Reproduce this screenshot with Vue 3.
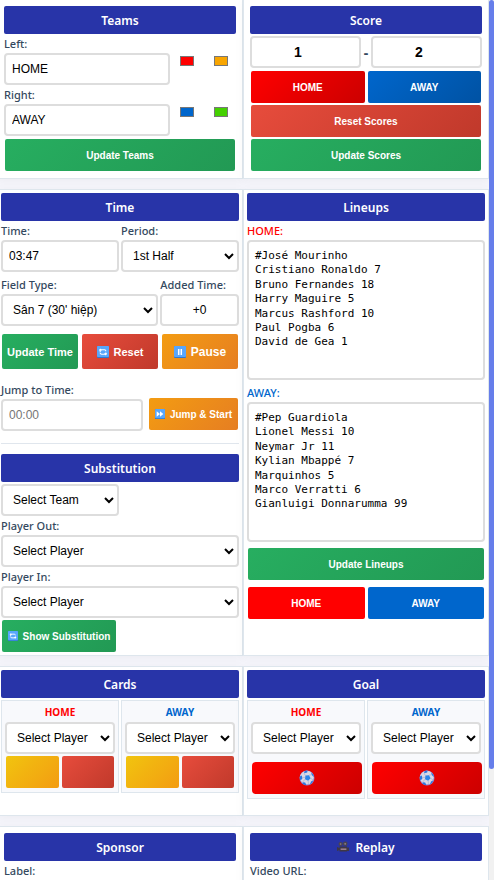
<script setup>
import { ref } from 'vue'

const teams = ref([
  { id: 'left', label: 'Left:', name: 'HOME', primary: '#ff0000', secondary: '#f8a500' },
  { id: 'right', label: 'Right:', name: 'AWAY', primary: '#0066cc', secondary: '#44d000' },
])
const scores = ref([1, 2])
const time = ref('03:47')
const added = ref('+0')
const jump = ref('')
const lineups = ref([
  {
    side: 'home',
    name: 'HOME',
    text: '#José Mourinho\nCristiano Ronaldo 7\nBruno Fernandes 18\nHarry Maguire 5\nMarcus Rashford 10\nPaul Pogba 6\nDavid de Gea 1',
  },
  {
    side: 'away',
    name: 'AWAY',
    text: '#Pep Guardiola\nLionel Messi 10\nNeymar Jr 11\nKylian Mbappé 7\nMarquinhos 5\nMarco Verratti 6\nGianluigi Donnarumma 99',
  },
])
const sides = [
  { side: 'home', name: 'HOME' },
  { side: 'away', name: 'AWAY' },
]
</script>

<template>
  <div class="shell">
    <main class="board">
      <div class="row first">
        <section class="card roomy">
          <h2>Teams</h2>
          <template v-for="t in teams" :key="t.id">
            <label :for="t.id">{{ t.label }}</label>
            <div class="team">
              <input :id="t.id" v-model="t.name" type="text" />
              <div class="swatches">
                <input v-model="t.primary" type="color" :aria-label="t.name + ' primary'" />
                <input v-model="t.secondary" type="color" :aria-label="t.name + ' secondary'" />
              </div>
            </div>
          </template>
          <div class="actions"><button class="green">Update Teams</button></div>
        </section>
        <section class="card roomy">
          <h2>Score</h2>
          <div class="score">
            <input v-model="scores[0]" type="text" aria-label="Home score" />
            <span>-</span>
            <input v-model="scores[1]" type="text" aria-label="Away score" />
          </div>
          <div class="actions">
            <button class="home-grad">HOME</button>
            <button class="away-grad">AWAY</button>
          </div>
          <div class="actions"><button class="red">Reset Scores</button></div>
          <div class="actions"><button class="green">Update Scores</button></div>
        </section>
      </div>

      <div class="row">
        <section class="card">
          <h2>Time</h2>
          <div class="halves">
            <div>
              <label for="time">Time:</label>
              <input id="time" v-model="time" type="text" />
            </div>
            <div>
              <label for="period">Period:</label>
              <select id="period"><option>1st Half</option></select>
            </div>
          </div>
          <div class="thirds">
            <div>
              <label for="field">Field Type:</label>
              <select id="field"><option>Sân 7 (30' hiệp)</option></select>
            </div>
            <div>
              <label for="added">Added Time:</label>
              <input id="added" v-model="added" class="centered" type="text" />
            </div>
          </div>
          <div class="clock">
            <button class="green">Update Time</button>
            <button class="red">
              <svg class="icon" viewBox="0 0 12 12" aria-hidden="true">
                <rect width="12" height="12" rx="1" fill="#2f78cf" />
                <rect width="12" height="11" rx="1" fill="#58a6fb" />
                <path d="M3.2 6V3.8H7.5A1.3 1.3 0 0 1 8.8 5.2M3.2 6.6A1.4 1.4 0 0 0 4.6 8.2H8.8V6.4" fill="none" stroke="#fff" stroke-width="1.1" />
                <path d="M1.8 4.6L3.2 2.6L5 4.6ZM7 7.2L8.8 9.4L10.2 7.2Z" fill="#fff" />
              </svg>
              Reset
            </button>
            <button class="orange big">
              <svg class="icon" viewBox="0 0 12 12" aria-hidden="true">
                <rect width="12" height="12" rx="1" fill="#2f78cf" />
                <rect width="12" height="11" rx="1" fill="#58a6fb" />
                <path d="M4.7 3V9M7.3 3V9" stroke="#fff" stroke-width="1.5" />
              </svg>
              Pause
            </button>
          </div>
          <div class="jump">
            <div>
              <label for="jump">Jump to Time:</label>
              <input id="jump" v-model="jump" type="text" placeholder="00:00" />
            </div>
            <button class="orange">
              <svg class="icon small" viewBox="0 0 12 12" aria-hidden="true">
                <rect width="12" height="12" rx="1" fill="#2f78cf" />
                <rect width="12" height="11" rx="1" fill="#58a6fb" />
                <path d="M2 2.8L6 6L2 9.2ZM6 2.8L10 6L6 9.2Z" fill="#fff" />
              </svg>
              Jump &amp; Start
            </button>
          </div>
          <hr />
          <h2>Substitution</h2>
          <div class="halves">
            <select aria-label="Team"><option>Select Team</option></select>
          </div>
          <label for="out">Player Out:</label>
          <select id="out"><option>Select Player</option></select>
          <label for="in">Player In:</label>
          <select id="in"><option>Select Player</option></select>
          <button class="green show">
            <svg class="icon small" viewBox="0 0 12 12" aria-hidden="true">
              <rect width="12" height="12" rx="1" fill="#2f78cf" />
              <rect width="12" height="11" rx="1" fill="#58a6fb" />
              <path d="M3.2 6V3.8H7.5A1.3 1.3 0 0 1 8.8 5.2M3.2 6.6A1.4 1.4 0 0 0 4.6 8.2H8.8V6.4" fill="none" stroke="#fff" stroke-width="1.1" />
              <path d="M1.8 4.6L3.2 2.6L5 4.6ZM7 7.2L8.8 9.4L10.2 7.2Z" fill="#fff" />
            </svg>
            Show Substitution
          </button>
        </section>
        <section class="card">
          <h2>Lineups</h2>
          <div v-for="l in lineups" :key="l.side" class="lineup">
            <label :for="'lineup-' + l.side" :class="l.side">{{ l.name }}:</label>
            <textarea :id="'lineup-' + l.side" v-model="l.text" spellcheck="false"></textarea>
          </div>
          <div class="actions"><button class="green">Update Lineups</button></div>
          <div class="actions toggles">
            <button class="home-flat">HOME</button>
            <button class="away-flat">AWAY</button>
          </div>
        </section>
      </div>

      <div class="row">
        <section class="card events">
          <h2>Cards</h2>
          <div class="halves">
            <div v-for="s in sides" :key="s.side" class="box">
              <h3 :class="s.side">{{ s.name }}</h3>
              <select :aria-label="s.name + ' card player'"><option>Select Player</option></select>
              <div class="actions">
                <button class="yellow" aria-label="Yellow card"></button>
                <button class="red" aria-label="Red card"></button>
              </div>
            </div>
          </div>
        </section>
        <section class="card events">
          <h2>Goal</h2>
          <div class="halves">
            <div v-for="s in sides" :key="s.side" class="box">
              <h3 :class="s.side">{{ s.name }}</h3>
              <select :aria-label="s.name + ' goal player'"><option>Select Player</option></select>
              <button class="home-grad goal" aria-label="Goal">
                <svg viewBox="0 0 16 16" aria-hidden="true">
                  <circle cx="8" cy="8" r="7.5" fill="#8c7fd0" />
                  <circle cx="7.8" cy="7.6" r="6.9" fill="#d9d8e6" />
                  <path d="M6.4 5.6L10 5.2L11.6 8.2L9.2 10.8L6 9.2Z" fill="#2c86ea" />
                  <path d="M5.6 1L8.6 .6L8.2 2.6L5 3.2ZM.8 6.4L2.8 5.4L3.4 8.6L1.6 10.4A7 7 0 0 1 .8 6.4ZM12.2 2.2L14.6 5L14.6 7L12.6 4.8ZM3.6 12.2L6.2 12.6L7.4 15.2A7 7 0 0 1 3.4 13.4ZM12 11.6L14.4 10.2A7 7 0 0 1 11 14.4Z" fill="#2c76de" />
                  <path d="M6.4 5.6L5 3.2M10 5.2L12.6 4.8M11.6 8.2L14.4 10.2M9.2 10.8L9.4 14.6M6 9.2L3.6 12.2M6.2 7.4L3.4 7.4" stroke="#a5a5c4" stroke-width=".6" />
                </svg>
              </button>
            </div>
          </div>
        </section>
      </div>

      <div class="row">
        <section class="card roomy">
          <h2>Sponsor</h2>
          <label for="sponsor">Label:</label>
          <input id="sponsor" type="text" />
        </section>
        <section class="card roomy">
          <h2>
            <svg class="icon" viewBox="0 0 12 12" aria-hidden="true">
              <circle cx="3.6" cy="3" r="2.1" fill="#4b4350" />
              <circle cx="8.2" cy="2.8" r="2.3" fill="#4b4350" />
              <circle cx="3.6" cy="3" r=".8" fill="#8b8090" />
              <circle cx="8.2" cy="2.8" r=".9" fill="#8b8090" />
              <path d="M2.5 5.4H10V10.6H2.5ZM0 6L2.5 7V9L0 10ZM10 6.5H12V10H10Z" fill="#3f3745" />
              <path d="M3.6 8.2H9.4" stroke="#9a7f8c" stroke-width="1.6" />
            </svg>
            Replay
          </h2>
          <label for="video">Video URL:</label>
          <input id="video" type="text" />
        </section>
      </div>
    </main>
    <div class="rail" aria-hidden="true"><div class="thumb"></div></div>
  </div>
</template>

<style>
body {
  margin: 0;
}
</style>

<style scoped>
* {
  box-sizing: border-box;
}
.shell {
  display: flex;
  height: 100vh;
  overflow: hidden;
  background: #f5f5fb;
  font-family: 'Segoe UI', 'Noto Sans', sans-serif;
  color: #34495e;
}
.board {
  flex: 1;
  min-width: 0;
  margin-left: -3px;
  display: flex;
  flex-direction: column;
  gap: 10px;
}
.rail {
  flex: none;
  width: 5px;
  background: #f1f1f1;
}
.thumb {
  height: 87.4%;
  border-radius: 3px;
  background: #667eea;
}
.row {
  flex: none;
  display: grid;
  grid-template-columns: 1fr 1fr;
}
.card {
  min-width: 0;
  padding: 3px;
  border: 1px solid #dee6ed;
  background: #fff;
  box-shadow: 0 2px 10px rgba(0, 0, 0, 0.04);
}
.card.roomy {
  padding: 6px;
}
.first .card {
  border-top: 0;
}
.events {
  min-height: 150px;
}
h2 {
  display: flex;
  align-items: center;
  justify-content: center;
  gap: 6px;
  height: 28px;
  margin: 0 0 2px;
  border-radius: 2px;
  background: #2834a8;
  color: #fff;
  font-size: 12px;
  font-weight: 600;
}
label {
  display: block;
  margin-bottom: 2px;
  font-size: 11px;
  font-weight: 500;
  line-height: 15px;
}
.home {
  color: #ff0000;
}
.away {
  color: #0066cc;
}
input[type='text'],
select,
textarea {
  display: block;
  width: 100%;
  height: 32px;
  margin: 0 0 2px;
  padding: 0 6px;
  border: 2px solid #ddd;
  border-radius: 4px;
  background: #fff;
  color: #000;
  font: 12px 'Liberation Sans', Arial, sans-serif;
}
input::placeholder {
  color: #757575;
}
input.centered {
  text-align: center;
}
textarea {
  height: 140px;
  padding: 7px 6px;
  resize: none;
  font: 11px/1.31 Consolas, 'DejaVu Sans Mono', monospace;
}
.team {
  display: grid;
  grid-template-columns: 1fr 66px;
}
.swatches {
  display: flex;
  align-items: flex-start;
  gap: 20px;
  padding: 3px 0 0 10px;
}
input[type='color'] {
  appearance: none;
  width: 14px;
  height: 10px;
  padding: 0;
  border: 0;
  background: none;
}
input[type='color']::-webkit-color-swatch-wrapper {
  padding: 0;
}
input[type='color']::-webkit-color-swatch {
  border: 1px solid #777;
  border-radius: 0;
}
.score {
  display: grid;
  grid-template-columns: 1fr 10px 1fr;
  align-items: center;
  text-align: center;
  font-size: 14px;
  font-weight: 700;
  line-height: 32px;
}
.score input[type='text'] {
  padding-right: 21px;
  text-align: center;
  font-size: 14px;
  font-weight: 700;
}
.actions {
  display: flex;
  gap: 3px;
  padding: 1px;
}
button {
  display: flex;
  align-items: center;
  justify-content: center;
  gap: 5px;
  height: 32px;
  padding: 0;
  border: 0;
  border-radius: 2px;
  color: #fff;
  font: 700 10px 'Liberation Sans', Arial, sans-serif;
  white-space: nowrap;
}
.actions button {
  flex: 1;
}
.green {
  background: linear-gradient(135deg, #27ae60, #229954);
}
.red {
  background: linear-gradient(135deg, #e74c3c, #c0392b);
}
.orange {
  background: linear-gradient(135deg, #f39c12, #e67e22);
}
.yellow {
  background: linear-gradient(135deg, #f1c40f, #f39c12);
}
.home-grad {
  background: linear-gradient(135deg, #ff0000, #cc0000);
}
.away-grad {
  background: linear-gradient(135deg, #0066cc, #0052a3);
}
.home-flat {
  background: #ff0000;
}
.away-flat {
  background: #0066cc;
}
.halves {
  display: grid;
  grid-template-columns: 1fr 1fr;
  gap: 2px;
}
.thirds {
  display: grid;
  grid-template-columns: 2fr 1fr;
  gap: 2px;
  margin-top: 3px;
}
.clock {
  display: grid;
  grid-template-columns: repeat(3, 1fr);
  gap: 4px;
  margin: 6px 1px 13px;
}
.clock button {
  height: 35px;
  font-size: 11px;
}
.clock .big {
  font-size: 12px;
}
.jump {
  display: grid;
  grid-template-columns: 1fr 89px;
  align-items: end;
  gap: 6px;
  padding-right: 1px;
}
.jump button {
  margin-bottom: 3px;
}
.icon {
  width: 12px;
  height: 12px;
}
.icon.small {
  width: 10px;
  height: 10px;
}
hr {
  height: 1px;
  margin: 10px 0;
  border: 0;
  background: #e0e6ed;
}
.show {
  width: 114px;
  margin: 0 1px;
}
.lineup + .lineup {
  margin-top: 3px;
}
.lineup textarea {
  margin-bottom: 5px;
}
.toggles {
  margin-top: 5px;
}
.box {
  min-width: 0;
  padding: 3px;
  border: 1px solid #dee6ed;
  background: #f8f9fc;
}
.box h3 {
  margin: 0;
  font-size: 10px;
  font-weight: 700;
  line-height: 16px;
  padding-bottom: 2px;
  text-align: center;
}
.box .actions {
  padding: 0 1px 1px;
}
.events .halves {
  align-items: start;
}
.goal {
  width: 100%;
  margin: 8px 1px 1px;
  border-radius: 4px;
}
.goal svg {
  width: 16px;
  height: 16px;
}
</style>
